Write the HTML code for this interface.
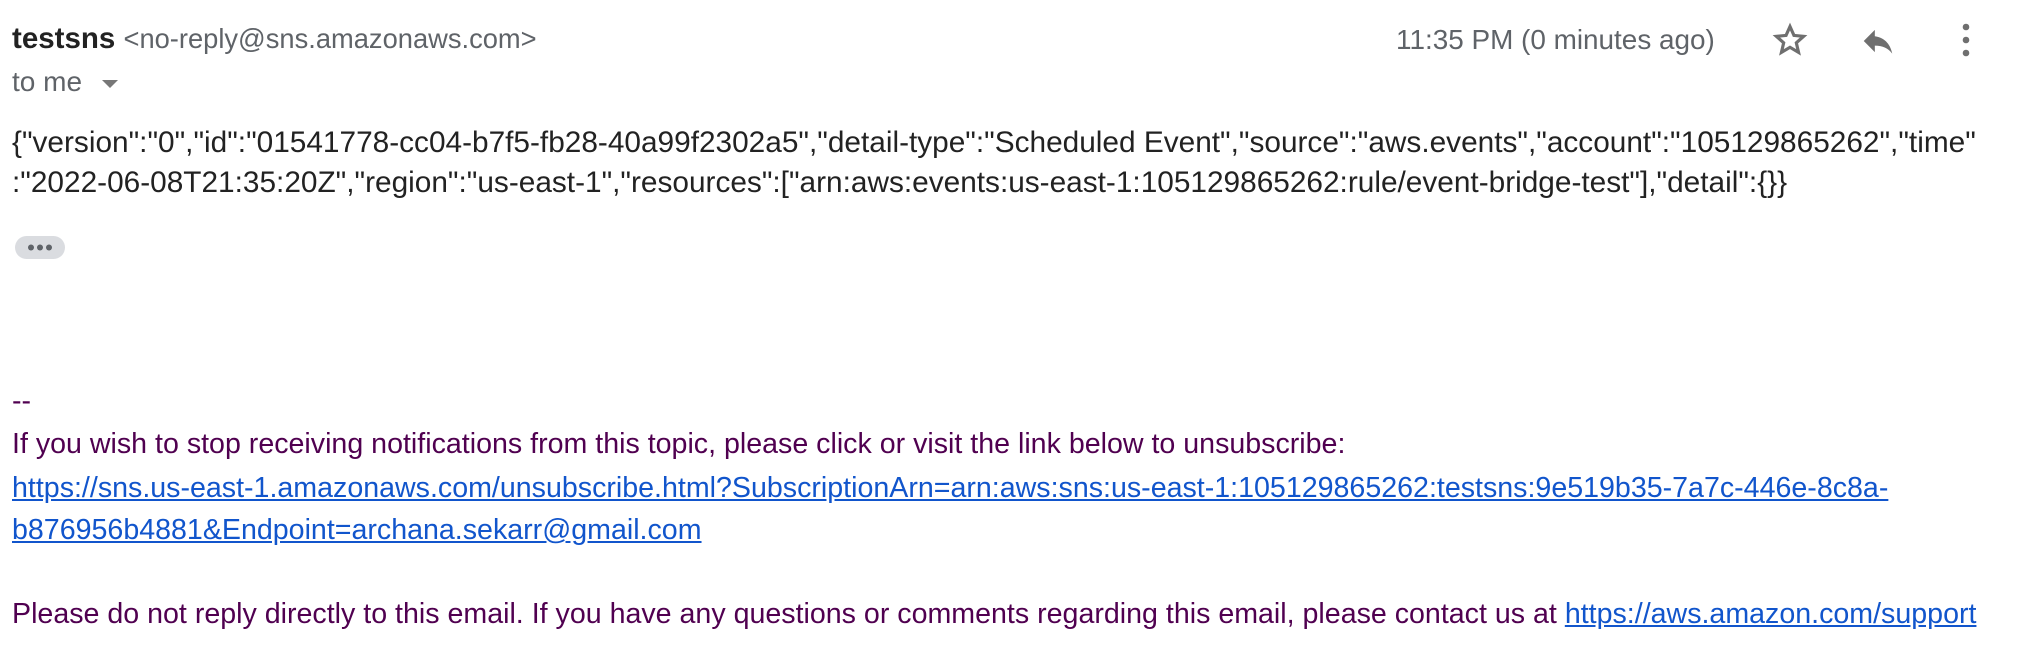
<!DOCTYPE html>
<html><head><meta charset="utf-8"><style>
body{margin:0;width:2022px;height:668px;background:#fff;position:relative;overflow:hidden;font-family:"Liberation Sans",Arial,sans-serif;}
.a{position:absolute;white-space:nowrap;}
.j{font-size:29.8px;color:#222;left:12px;}
.p{font-size:28.6px;color:#500050;left:12px;}
a{color:#1155cc;text-decoration:underline;}
</style></head><body>
<div class="a" style="left:12px;top:22px;font-size:29.5px;"><b style="color:#222">testsns</b> <span style="font-size:27.3px;color:#5f6368">&lt;no-reply@sns.amazonaws.com&gt;</span></div>
<div class="a" style="left:12px;top:66px;font-size:28px;color:#5f6368">to me <span style="display:inline-block;width:0;height:0;border-left:8px solid transparent;border-right:8px solid transparent;border-top:8px solid #777;vertical-align:middle;margin-left:12px"></span></div>
<div class="a" style="left:1396px;top:24px;font-size:27.9px;color:#5f6368">11:35 PM (0 minutes ago)</div>
<svg class="a" style="left:1771px;top:21px" width="38" height="38" viewBox="0 0 24 24"><path d="M12 3.5l2.5 5.6 6.1.6-4.6 4.1 1.4 6-5.4-3.2-5.4 3.2 1.4-6-4.6-4.1 6.1-.6z" fill="none" stroke="#6f6f6f" stroke-width="2" stroke-linejoin="miter"/></svg>
<svg class="a" style="left:1859px;top:22px" width="38" height="38" viewBox="0 0 24 24"><path d="M10 9V5l-7 7 7 7v-4.1c5 0 8.5 1.6 11 5.1-1-5-4-10-11-11z" fill="#6f6f6f"/></svg>
<svg class="a" style="left:1957px;top:20px" width="18" height="40" viewBox="0 0 18 40"><circle cx="9" cy="7" r="3.3" fill="#6f6f6f"/><circle cx="9" cy="20" r="3.3" fill="#6f6f6f"/><circle cx="9" cy="33" r="3.3" fill="#6f6f6f"/></svg>
<div class="a j" style="top:126px">{"version":"0","id":"01541778-cc04-b7f5-fb28-40a99f2302a5","detail-type":"Scheduled Event","source":"aws.events","account":"105129865262","time"</div>
<div class="a j" style="top:166px">:"2022-06-08T21:35:20Z","region":"us-east-1","resources":["arn:aws:events:us-east-1:105129865262:rule/event-bridge-test"],"detail":{}}</div>
<div class="a" style="left:15px;top:236px;width:50px;height:23px;border-radius:12px;background:#dadce0"><svg width="50" height="23"><circle cx="16" cy="11.5" r="3" fill="#5f6368"/><circle cx="25" cy="11.5" r="3" fill="#5f6368"/><circle cx="34" cy="11.5" r="3" fill="#5f6368"/></svg></div>
<div class="a p" style="top:385px">--</div>
<div class="a p" style="top:428px">If you wish to stop receiving notifications from this topic, please click or visit the link below to unsubscribe:</div>
<div class="a p" style="top:472px"><a>https://sns.us-east-1.amazonaws.com/unsubscribe.html?SubscriptionArn=arn:aws:sns:us-east-1:105129865262:testsns:9e519b35-7a7c-446e-8c8a-</a></div>
<div class="a p" style="top:514px"><a>b876956b4881&amp;Endpoint=archana.sekarr@gmail.com</a></div>
<div class="a p" style="top:598px">Please do not reply directly to this email. If you have any questions or comments regarding this email, please contact us at <a>https://aws.amazon.com/support</a></div>
</body></html>
